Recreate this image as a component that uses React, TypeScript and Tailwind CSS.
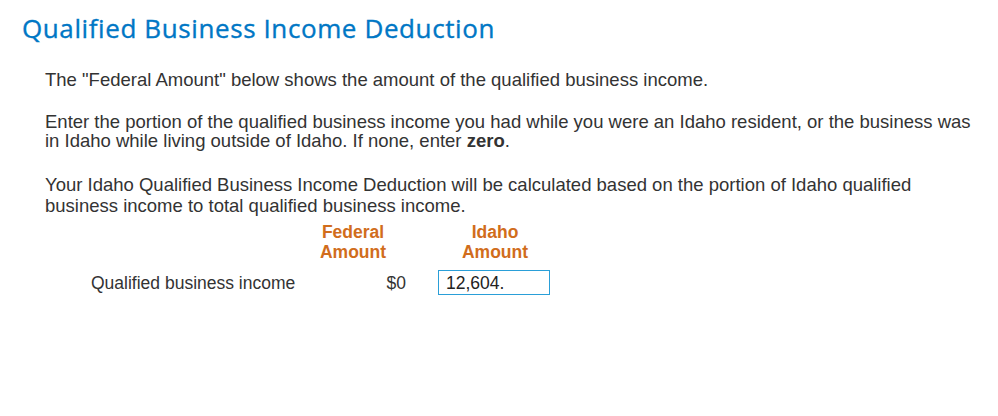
export default function App() {
  return (
    <div className="min-h-[416px] bg-white pt-[11px] pl-[22px] pr-4 font-['Liberation_Sans',Arial,sans-serif] text-[#333]">
      <h1 className="font-['Open_Sans',sans-serif] text-[26px] font-medium leading-[34px] tracking-[0.6px] text-[#0077c5] [-webkit-text-stroke:0.35px_#0077c5] [font-variant-ligatures:none]">
        Qualified Business Income Deduction
      </h1>

      <div className="pl-[23px] pt-[26px] text-[18.5px] leading-[18px]">
        <p>The "Federal Amount" below shows the amount of the qualified business income.</p>

        <p className="mt-[23px] leading-[19px]">
          Enter the portion of the qualified business income you had while you were an Idaho resident, or the business was
          in Idaho while living outside of Idaho. If none, enter <b>zero</b>.
        </p>

        <p className="mt-[24px] max-w-[880px] leading-[21px]">
          Your Idaho Qualified Business Income Deduction will be calculated based on the portion of Idaho qualified
          business income to total qualified business income.
        </p>

        <div className="mt-[6px] grid grid-cols-[255px_106px_178px] text-[17.5px] leading-[20px]">
          <div />
          <div className="text-center font-bold text-[#d16d1c]">
            Federal
            <br />
            Amount
          </div>
          <div className="text-center font-bold text-[#d16d1c]">
            Idaho
            <br />
            Amount
          </div>

          <div className="mt-[8px] flex h-[25px] items-center pl-[46px]">Qualified business income</div>
          <div className="mt-[8px] flex h-[25px] items-center justify-end">$0</div>
          <div className="mt-[8px] pl-[32px]">
            <div className="flex h-[25px] w-[112px] items-center border border-[#2a9fd8] px-[7px] text-[#222]">
              12,604.
            </div>
          </div>
        </div>
      </div>
    </div>
  );
}
